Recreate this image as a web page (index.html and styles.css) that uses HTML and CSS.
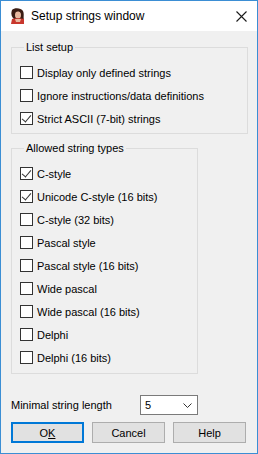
FILE: index.html
```html
<!DOCTYPE html>
<html lang="en">

<head>
    <meta charset="UTF-8">
    <meta name="viewport" content="width=device-width, initial-scale=1.0">
    <title>Setup strings window</title>
    <link rel="stylesheet" href="styles.css">
</head>

<body>
    <div class="window">
        <div class="titlebar">
            <svg class="app_icon" width="16" height="16" viewBox="0 0 16 16">
                <path d="M3 2 C5 -0.5 12 -0.5 14 3 C15.5 6 14 9 15 12 L10 12 L6 12 C4 10 1 8 3 2 Z" fill="#3a1d14"/>
                <ellipse cx="9" cy="7" rx="3" ry="3.8" fill="#e8b9a0"/>
                <path d="M7 4 C8 2.5 11 3 12 5 L12 3 C10 1.5 7 2 7 4 Z" fill="#3a1d14"/>
                <path d="M2 16 L3 11 C5 10 12 10 15 11 L15 16 Z" fill="#c8372d"/>
                <path d="M6 11 L12 11 L11 14 L7 14 Z" fill="#e8b9a0"/>
            </svg>
            <span class="title">Setup strings window</span>
            <svg class="close" width="11" height="11" viewBox="0 0 11 11">
                <path d="M0.5 0.5 L10.5 10.5 M10.5 0.5 L0.5 10.5" stroke="#1a1a1a" stroke-width="1.1" fill="none"/>
            </svg>
        </div>

        <div class="client">
            <fieldset class="group group_list">
                <legend>List setup</legend>
                <label class="check"><span class="box"></span>Display only defined strings</label>
                <label class="check"><span class="box"></span>Ignore instructions/data definitions</label>
                <label class="check"><span class="box checked"></span>Strict ASCII (7-bit) strings</label>
            </fieldset>

            <fieldset class="group group_types">
                <legend>Allowed string types</legend>
                <label class="check"><span class="box checked"></span>C-style</label>
                <label class="check"><span class="box checked"></span>Unicode C-style (16 bits)</label>
                <label class="check"><span class="box"></span>C-style (32 bits)</label>
                <label class="check"><span class="box"></span>Pascal style</label>
                <label class="check"><span class="box"></span>Pascal style (16 bits)</label>
                <label class="check"><span class="box"></span>Wide pascal</label>
                <label class="check"><span class="box"></span>Wide pascal (16 bits)</label>
                <label class="check"><span class="box"></span>Delphi</label>
                <label class="check"><span class="box"></span>Delphi (16 bits)</label>
            </fieldset>

            <div class="min_row">
                <span class="min_label">Minimal string length</span>
                <div class="combo">
                    <span>5</span>
                    <svg width="9" height="5" viewBox="0 0 9 5">
                        <path d="M0.5 0.5 L4.5 4.5 L8.5 0.5" stroke="#333" stroke-width="1" fill="none"/>
                    </svg>
                </div>
            </div>

            <div class="buttons">
                <button class="btn default">O<u>K</u></button>
                <button class="btn">Cancel</button>
                <button class="btn">Help</button>
            </div>
        </div>
    </div>
</body>

</html>
```

FILE: styles.css
```css
* {
    box-sizing: border-box;
}

body {
    margin: 0;
    font-family: "Liberation Sans", Arial, sans-serif;
    font-size: 11px;
    color: #000;
}

.window {
    width: 258px;
    height: 454px;
    border: 1px solid #3b8ed4;
    background: #f0f0f0;
    display: flex;
    flex-direction: column;
}

.titlebar {
    height: 30px;
    background: #fff;
    display: flex;
    align-items: center;
    padding: 0 10px 0 8px;
}

.app_icon {
    display: block;
    margin-right: 6px;
}

.title {
    flex: 1;
    font-size: 12px;
    line-height: 16px;
}

.close {
    display: block;
}

.client {
    flex: 1;
    padding: 8px 9px 0 10px;
}

.group {
    margin: 0;
    padding: 6px 0 3px 8px;
    border: 1px solid #dcdcdc;
    min-width: 0;
}

.group legend {
    margin-left: 4px;
    padding: 0 2px;
    line-height: 16px;
}

.group_types {
    width: 187px;
    margin-top: 6px;
    padding-bottom: 4px;
}

.check {
    display: flex;
    align-items: center;
    height: 23px;
    line-height: 16px;
    white-space: nowrap;
}

.box {
    width: 13px;
    height: 13px;
    margin-right: 4px;
    border: 1px solid #333;
    background: #fff;
    flex-shrink: 0;
    position: relative;
}

.box.checked::after {
    content: "";
    position: absolute;
    left: 3px;
    top: 0px;
    width: 4px;
    height: 8px;
    border-right: 1px solid #333;
    border-bottom: 1px solid #333;
    transform: rotate(40deg);
}

.min_row {
    display: grid;
    grid-template-columns: 129px 58px;
    align-items: center;
    margin-top: 21px;
}

.min_label {
    line-height: 16px;
}

.combo {
    height: 20px;
    border: 1px solid #7a7a7a;
    background: #fff;
    display: flex;
    align-items: center;
    justify-content: space-between;
    padding: 0 5px 0 4px;
}

.combo svg {
    display: block;
}

.buttons {
    display: flex;
    gap: 8px;
    margin-top: 7px;
}

.btn {
    width: 73px;
    height: 21px;
    padding: 0;
    font: inherit;
    color: #000;
    background: #e1e1e1;
    border: 1px solid #adadad;
}

.btn.default {
    border: 2px solid #0078d7;
}
```
